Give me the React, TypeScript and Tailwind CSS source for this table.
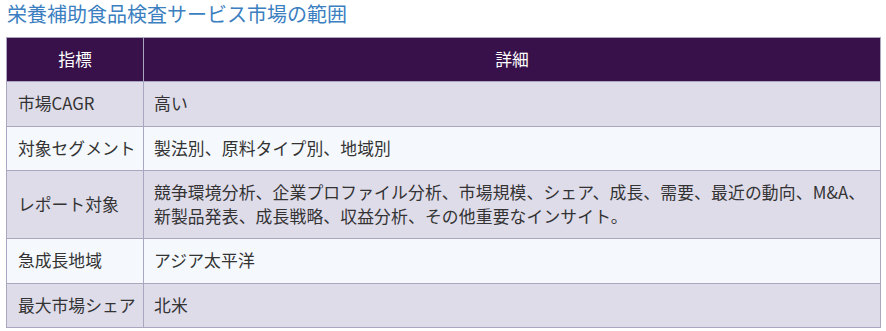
import React from 'react';

const rows: { label: string; detail: React.ReactNode }[] = [
  { label: '市場CAGR', detail: '高い' },
  { label: '対象セグメント', detail: '製法別、原料タイプ別、地域別' },
  {
    label: 'レポート対象',
    detail: (
      <>
        競争環境分析、企業プロファイル分析、市場規模、シェア、成長、需要、最近の動向、M&amp;A、
        <br />
        新製品発表、成長戦略、収益分析、その他重要なインサイト。
      </>
    ),
  },
  { label: '急成長地域', detail: 'アジア太平洋' },
  { label: '最大市場シェア', detail: '北米' },
];

export default function App() {
  return (
    <div
      className="w-[886px] h-[331px] bg-white overflow-hidden"
      style={{ fontFamily: '"Noto Sans CJK JP", "Liberation Sans", sans-serif' }}
    >
      <h2 className="pl-[7px] pt-[1px] h-[37px] text-[20px] leading-[26px] text-[#3b7fc1] font-normal">
        栄養補助食品検査サービス市場の範囲
      </h2>
      <table className="ml-[6px] w-[875px] border-collapse text-[16.8px] leading-[23.5px] text-[#333]">
        <thead>
          <tr className="bg-[#38104a] text-white">
            <th className="w-[137px] h-[44px] p-0 border border-[#a9a6c0] font-normal text-center">指標</th>
            <th className="h-[44px] p-0 border border-[#a9a6c0] font-normal text-center">詳細</th>
          </tr>
        </thead>
        <tbody>
          {rows.map((r, i) => (
            <tr key={r.label} className={i % 2 === 0 ? 'bg-[#dfdcea]' : 'bg-[#f5f9fd]'}>
              <td className="border border-[#a9a6c0] pl-[11px] pr-[2px] py-[10px] whitespace-nowrap">{r.label}</td>
              <td className="border border-[#a9a6c0] px-[10px] py-[10px] whitespace-nowrap tracking-[0.15px]">{r.detail}</td>
            </tr>
          ))}
        </tbody>
      </table>
    </div>
  );
}
